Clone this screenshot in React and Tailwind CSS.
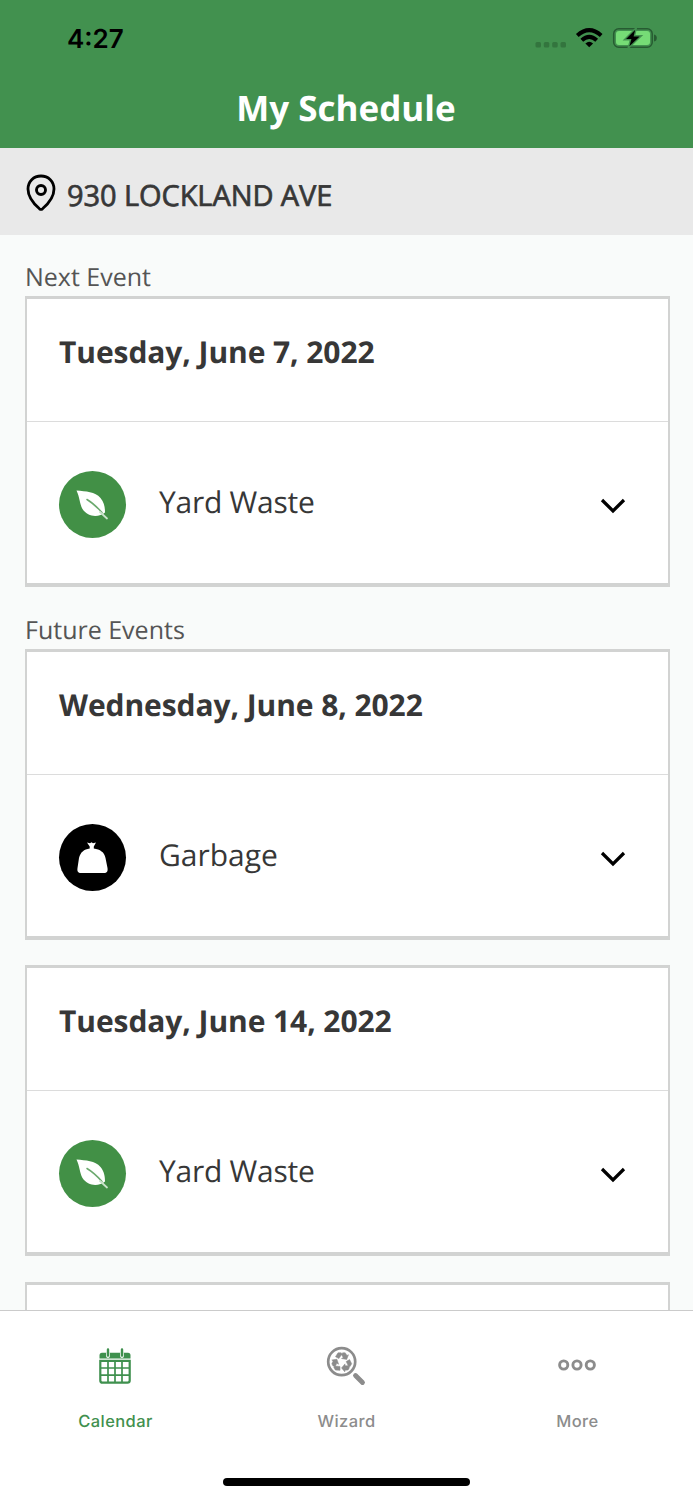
import React from 'react';

const events = [
  { date: 'Tuesday, June 7, 2022', type: 'Yard Waste' },
  { date: 'Wednesday, June 8, 2022', type: 'Garbage' },
  { date: 'Tuesday, June 14, 2022', type: 'Yard Waste' },
];

const LeafIcon = () => (
  <svg width="67" height="67" viewBox="0 0 67 67" fill="none">
    <path d="M17.500 19.500C27 20.500 36 20.500 41.500 27C45.500 32 46 37 46 41.500C40 46.500 29 46.500 23.500 38C20.500 32.500 21 27 17.500 19.500Z" fill="white" />
    <path d="M28 28.500C33 31.500 38 36 43 41.500" stroke="#6ba96e" strokeWidth="1.500" strokeLinecap="round" />
    <path d="M41 41L48 47.500" stroke="#c9e2ca" strokeWidth="1.800" strokeLinecap="round" />
  </svg>
);

const GarbageIcon = () => (
  <svg width="67" height="67" viewBox="0 0 67 67" fill="white">
    <path d="M28 18.500L31 19.300L32.500 18.300L34 19.300L37 18.500L34.800 22.500V24.500C41 25.500 45.500 28 46.500 34L48.500 44C49 47.500 48 49 45 49H22C19 49 18 47.500 18.500 44L20 34C21.500 28 25 25.500 30.700 24.500V22.500Z" />
  </svg>
);

const PinIcon = () => (
  <svg className="mt-[2px]" width="30" height="38" viewBox="0 0 30 38" fill="none" stroke="black">
    <path d="M15 2C7.500 2 2 7.500 2 15C2 23 8.500 30.500 13.500 34.800Q15 36 16.500 34.800C21.500 30.500 28 23 28 15C28 7.500 22.500 2 15 2Z" strokeWidth="2.800" />
    <circle cx="15" cy="16" r="4.500" strokeWidth="2.900" />
  </svg>
);

const StatusIcons = () => (
  <svg width="124" height="24" viewBox="0 0 124 24">
    <g fill="#33753e">
      <rect x="0.500" y="16" width="5.500" height="5.500" rx="1.500" />
      <rect x="8.800" y="16" width="5.500" height="5.500" rx="1.500" />
      <rect x="17.200" y="16" width="5.500" height="5.500" rx="1.500" />
      <rect x="25.500" y="16" width="5.500" height="5.500" rx="1.500" />
    </g>
    <g fill="none" stroke="black" strokeWidth="4">
      <path d="M42.300 9.500Q54.200 -1.200 66.200 9.500" />
      <path d="M46.800 14.300Q54.200 7.300 61.700 14.300" />
    </g>
    <path d="M50.400 17.400Q54.200 14.200 58.100 17.400L54.200 21.300Z" fill="black" />
    <rect x="78.700" y="2.700" width="38.500" height="18.600" rx="5" fill="none" stroke="#275b32" strokeWidth="1.500" />
    <rect x="81" y="5" width="34" height="14" rx="3" fill="#76dc76" />
    <path d="M119 8.500Q121.800 9 121.800 12T119 15.500Z" fill="#275b32" />
    <path d="M101.500 1.500L89.300 13.700H95.500L93 22.500L106.500 9.800H99.500Z" fill="black" stroke="#42914f" strokeWidth="1.400" />
  </svg>
);

const CalendarIcon = () => (
  <svg width="32" height="38" viewBox="0 0 32 38" fill="none" stroke="#3f904e">
    <path d="M0.500 11.500V8.500Q0.500 5.800 3 5.800H29Q31.500 5.800 31.500 8.500V11.500Z" fill="#3f904e" stroke="none" />
    <path d="M9 6.500V9M23 6.500V9" stroke="white" strokeWidth="3.800" strokeLinecap="round" />
    <path d="M9 2.500V8.500M23 2.500V8.500" strokeWidth="2.400" strokeLinecap="round" />
    <path d="M1.300 13.800H30.700V33.500Q30.700 35.700 28.500 35.700H3.500Q1.300 35.700 1.300 33.500Z" strokeWidth="2.200" />
    <path d="M9 13V35M16 13V35M23 13V35M1 21H31M1 28.200H31" strokeWidth="1.700" />
  </svg>
);

const WizardIcon = () => (
  <svg width="40" height="40" viewBox="0 0 40 40" fill="none" stroke="#8c8c8c">
    <circle cx="15.700" cy="15.700" r="13.500" strokeWidth="2.700" />
    <path d="M29.500 29.500L36.500 36.500" strokeWidth="4.800" strokeLinecap="round" />
    <g fill="#8c8c8c" stroke="#8c8c8c" strokeWidth="0.500">
      <path d="M9.500 10.700L12 6.800H15.200L16 8L12.900 12.600ZM16.600 6.800H19.200L21 9.400L22.500 8.700L20.700 13.500L15.500 12.500L17.200 11.500L15.600 8.800Z" />
      <path d="M9.500 10.700L12 6.800H15.200L16 8L12.900 12.600ZM16.600 6.800H19.200L21 9.400L22.500 8.700L20.700 13.500L15.500 12.500L17.200 11.500L15.600 8.800Z" transform="rotate(120 15.700 16.200)" />
      <path d="M9.500 10.700L12 6.800H15.200L16 8L12.900 12.600ZM16.600 6.800H19.200L21 9.400L22.500 8.700L20.700 13.500L15.500 12.500L17.200 11.500L15.600 8.800Z" transform="rotate(240 15.700 16.200)" />
    </g>
  </svg>
);

const MoreIcon = () => (
  <svg width="38" height="12" viewBox="0 0 38 12" fill="none" stroke="#8c8c8c" strokeWidth="2.900">
    <circle cx="5.700" cy="6" r="4.100" />
    <circle cx="19" cy="6" r="4.100" />
    <circle cx="32.300" cy="6" r="4.100" />
  </svg>
);

const EventCard = ({ event }) => (
  <div className="h-[291px] shrink-0 border-x-2 border-t-[3px] border-b-4 border-[#d2d3d2] bg-white">
    <div className="flex h-[123px] items-center border-b border-[#dcdcdc] pl-8 pb-[16px]">
      <h2 className="text-[30px] leading-[40px] font-bold tracking-[-0.08px] whitespace-nowrap">{event.date}</h2>
    </div>
    <div className="flex h-[161px] items-center pt-[3px] pl-8 pr-[42px]">
      <div className={`h-[67px] w-[67px] rounded-full ${event.type === 'Garbage' ? 'bg-black' : 'bg-[#429046]'}`}>
        {event.type === 'Garbage' ? <GarbageIcon /> : <LeafIcon />}
      </div>
      <span className={`ml-[33px] mb-[4px] flex-1 text-[30px] leading-[40px] ${event.type === 'Garbage' ? '' : 'tracking-[-0.25px]'}`}>{event.type}</span>
      <svg className="mt-1" width="26" height="16" viewBox="0 0 26 16" fill="none" stroke="black" strokeWidth="3.200">
        <path d="M2 2L13 13L24 2" />
      </svg>
    </div>
  </div>
);

const App = () => {
  return (
    <div className="flex h-[1500px] w-[693px] flex-col overflow-hidden bg-[#f9fbfa] font-['Open_Sans',sans-serif] text-[#373737] [text-rendering:geometricPrecision]">
      <header className="h-[148px] shrink-0 bg-[#42914f]">
        <div className="flex h-[76px] items-center justify-between pl-[67px] pr-[34px]">
          <span className="pt-[2px] font-['Inter',sans-serif] text-[26px] font-semibold text-black">4:27</span>
          <StatusIcons />
        </div>
        <h1 className="pt-[9px] pr-[1px] text-center text-[35px] leading-[48px] font-bold text-white">My Schedule</h1>
      </header>

      <div className="flex h-[87px] shrink-0 items-center bg-[#e9e9e9] pl-[26px]">
        <PinIcon />
        <span className="ml-[11px] mt-[8px] text-[29px] leading-[40px] tracking-[-0.08px] whitespace-nowrap [-webkit-text-stroke:0.7px_#373737]">930 LOCKLAND AVE</span>
      </div>

      <main className="flex min-h-0 flex-1 flex-col overflow-hidden pl-[25px] pr-[23px]">
        <p className="h-[61px] shrink-0 pt-[24px] text-[25px] leading-[36px] text-[#555]">Next Event</p>
        <EventCard event={events[0]} />
        <p className="h-[62px] shrink-0 pt-[25px] text-[25px] leading-[36px] text-[#555]">Future Events</p>
        <div className="flex flex-col gap-[25px]">
          <EventCard event={events[1]} />
          <EventCard event={events[2]} />
          <div className="mt-[1px] h-[40px] border-x-2 border-t-[3px] border-[#d2d3d2] bg-white"></div>
        </div>
      </main>

      <nav className="flex h-[190px] shrink-0 flex-col border-t border-[#cbcbcb] bg-white font-['Inter',sans-serif] text-[16.500px] font-medium tracking-[0.4px] text-[#8c8c8c]">
        <div className="grid h-[167px] shrink-0 grid-cols-3">
          <div className="flex flex-col items-center pt-[36px] text-[#3f904e]">
            <div className="flex h-[38px] items-center pr-[1px]"><CalendarIcon /></div>
            <span className="mt-[24px]">Calendar</span>
          </div>
          <div className="flex flex-col items-center pt-[36px]">
            <div className="flex h-[38px] items-center pr-[1px]"><WizardIcon /></div>
            <span className="mt-[24px]">Wizard</span>
          </div>
          <div className="flex flex-col items-center pt-[36px]">
            <div className="flex h-[38px] items-center pr-[1px] pb-[2px]"><MoreIcon /></div>
            <span className="mt-[24px]">More</span>
          </div>
        </div>
        <div className="mx-auto h-[8px] w-[247px] shrink-0 rounded-full bg-black"></div>
      </nav>
    </div>
  );
};

export default App;
